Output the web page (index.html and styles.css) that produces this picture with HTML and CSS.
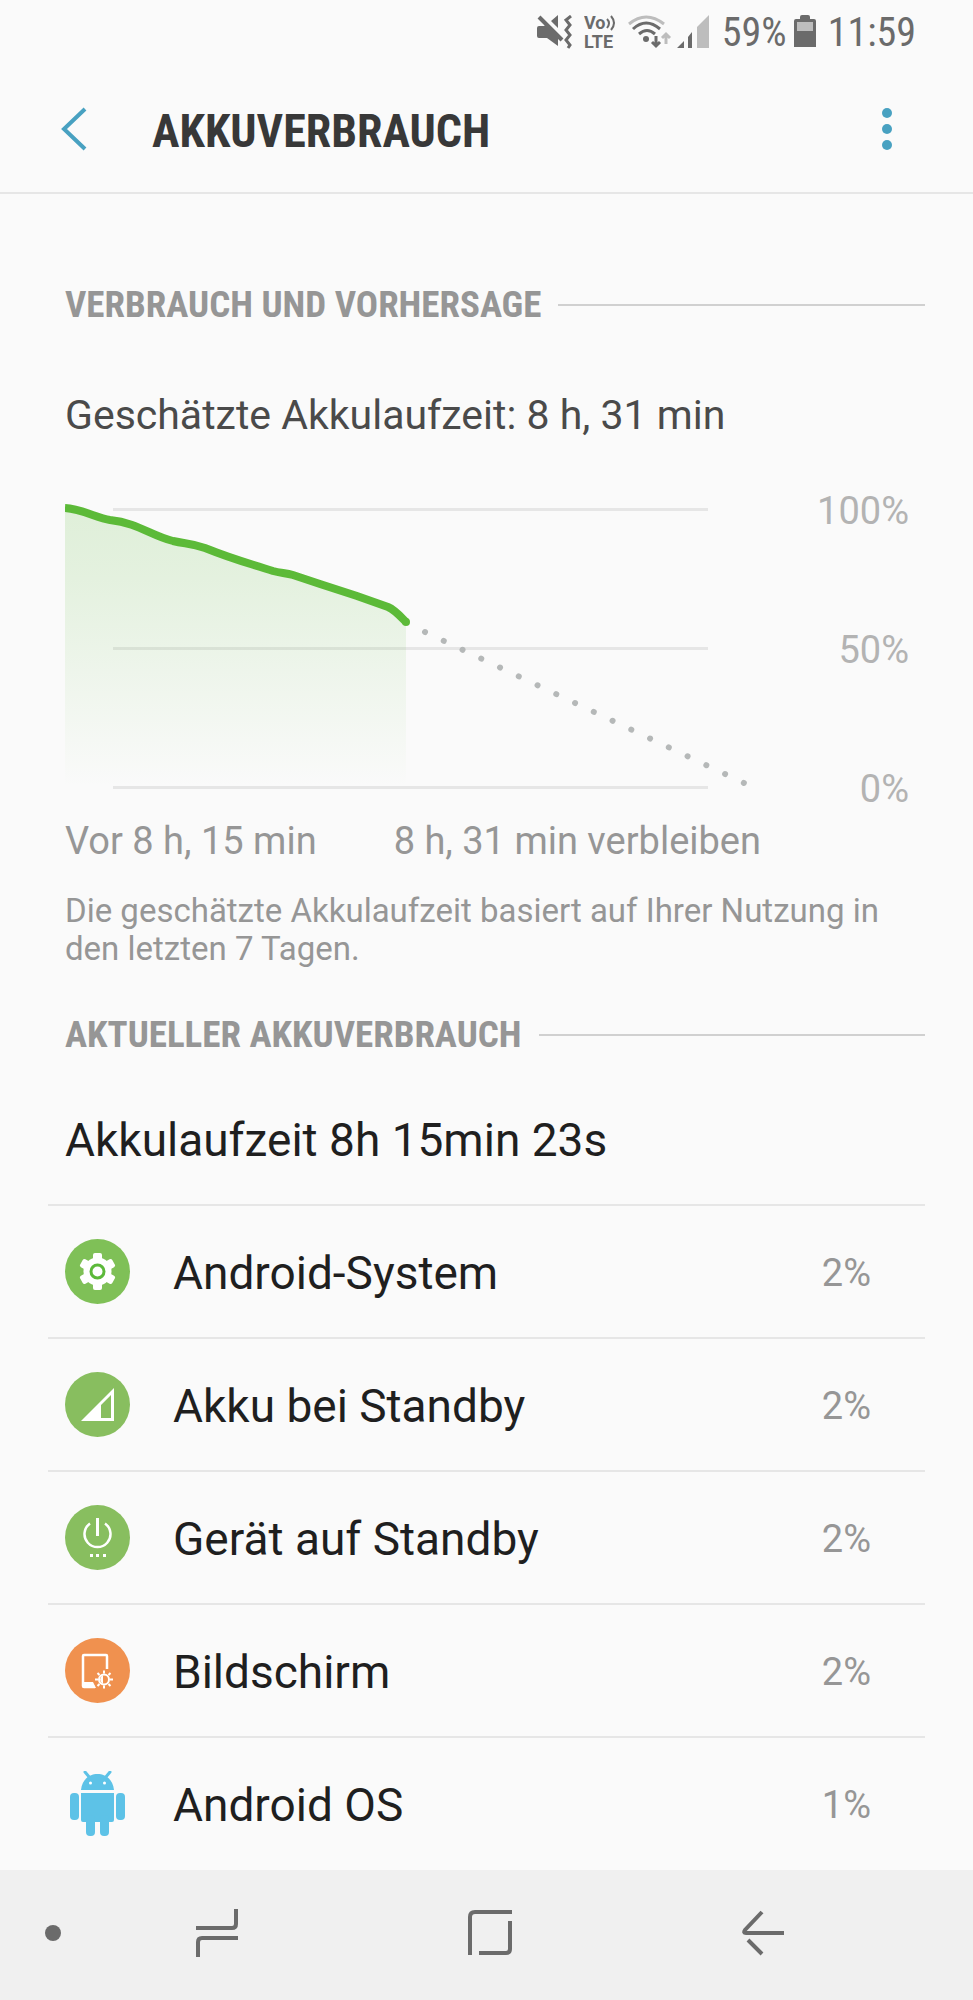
FILE: index.html
```html
<!DOCTYPE html>
<html lang="de">
<head>
    <meta charset="utf-8">
    <meta name="viewport" content="width=device-width, initial-scale=1">
    <title>Akkuverbrauch</title>
    <link rel="stylesheet" href="styles.css">
</head>
<body>
    <div class="status-bar">
        <svg class="mute-icon" width="36" height="34" viewBox="0 0 36 34">
            <path d="M2 11h5l4-3 10 11v12L10 23H2q-2 0-2-2v-8q0-2 2-2zM14 6l7-6v13z" fill="#6b6b6b"/>
            <path d="M4 0l22 23" stroke="#fafafa" stroke-width="3"/>
            <path d="M2 2l23 23" stroke="#6b6b6b" stroke-width="4"/>
            <path d="M34 1l-5 4 4 5-4 5 4 5-4 5 4 5-2 3" fill="none" stroke="#6b6b6b" stroke-width="3"/>
        </svg>
        <svg class="volte-icon" width="34" height="46" viewBox="0 -6 34 46">
            <text x="0" y="14" class="volte-text">Vo</text>
            <text x="0" y="33" class="volte-text">LTE</text>
            <path d="M23 4q4 4 0 9M27 1q6 7 0 14" fill="none" stroke="#6b6b6b" stroke-width="2"/>
        </svg>
        <svg class="wifi-icon" width="45" height="34" viewBox="0 0 45 34">
            <path d="M1 9Q18-5 36 9" fill="none" stroke="#bdbdbd" stroke-width="3"/>
            <path d="M5 14q13-12 27 0M11 19q8-7 16 0" fill="none" stroke="#6b6b6b" stroke-width="3"/>
            <circle cx="18" cy="24" r="3" fill="#6b6b6b"/>
            <path d="M28 21v10M24 27l4 4 4-4" fill="none" stroke="#6b6b6b" stroke-width="3"/>
            <path d="M38 29V19M34 23l4-4 4 4" fill="none" stroke="#bdbdbd" stroke-width="3"/>
        </svg>
        <svg class="signal-icon" width="33" height="34" viewBox="0 0 33 34">
            <path d="M0 33l7-7v7zM11 22l4-5v16h-4z" fill="#6b6b6b"/>
            <path d="M20 12L32 0v33H20z" fill="#bdbdbd"/>
        </svg>
        <span class="status-text">59%</span>
        <svg class="battery-icon" width="22" height="34" viewBox="0 0 22 34">
            <path d="M6 4V2q0-2 2-2h6q2 0 2 2v2h4q2 0 2 2v26H0V6q0-2 2-2z" fill="#6b6b6b"/>
            <path d="M3 7h16v9H3z" fill="#bdbdbd"/>
        </svg>
        <span class="status-text">11:59</span>
    </div>

    <header class="app-bar">
        <button class="icon-button" aria-label="Zurück">
            <svg width="26" height="44" viewBox="0 0 26 44">
                <path d="M24 2L3 22l21 20" fill="none" stroke="#48a1c1" stroke-width="4"/>
            </svg>
        </button>
        <h1>AKKUVERBRAUCH</h1>
        <button class="icon-button" aria-label="Weitere Optionen">
            <svg width="10" height="44" viewBox="0 0 10 44" fill="#48a1c1">
                <circle cx="5" cy="6" r="5"/>
                <circle cx="5" cy="22" r="5"/>
                <circle cx="5" cy="38" r="5"/>
            </svg>
        </button>
    </header>

    <main>
        <section class="forecast">
            <h2>VERBRAUCH UND VORHERSAGE</h2>
            <p class="estimate">Geschätzte Akkulaufzeit: 8 h, 31 min</p>
            <div class="chart">
                <svg class="chart-plot" viewBox="0 0 692 322">
                    <defs>
                        <linearGradient id="fade" x1="0" y1="0" x2="0" y2="1">
                            <stop offset="0" stop-color="#5cba38" stop-opacity="0.17"/>
                            <stop offset="0.25" stop-color="#5cba38" stop-opacity="0.14"/>
                            <stop offset="1" stop-color="#5cba38" stop-opacity="0"/>
                        </linearGradient>
                    </defs>
                    <path d="M48 20.500H643M48 159.500H643M48 298.500H643" stroke="#e6e6e6" stroke-width="3"/>
                    <path d="M0 19C17 20 32 29 45 31C73 34 85 46 108 52C121 55 126 54 140 59C170 71 180 73 208 82C215 84 221 84 228 86L255 95L292 107L323 118C330 121 335 127 341 133V298H0z" fill="url(#fade)"/>
                    <path d="M0 19C17 20 32 29 45 31C73 34 85 46 108 52C121 55 126 54 140 59C170 71 180 73 208 82C215 84 221 84 228 86L255 95L292 107L323 118C330 121 335 127 341 133" fill="none" stroke="#5cba38" stroke-width="8"/>
                    <circle cx="341" cy="133" r="4" fill="#5cba38"/>
                    <path d="M360 143L679 294" stroke="#b5b8b8" stroke-width="6" stroke-linecap="round" stroke-dasharray="0.010 20.740"/>
                </svg>
                <div class="chart-scale">
                    <span>100%</span>
                    <span>50%</span>
                    <span>0%</span>
                </div>
            </div>
            <div class="chart-times">
                <span>Vor 8 h, 15 min</span>
                <span>8 h, 31 min verbleiben</span>
            </div>
            <p class="hint">Die geschätzte Akkulaufzeit basiert auf Ihrer Nutzung in den letzten 7 Tagen.</p>
        </section>

        <section class="usage">
            <h2>AKTUELLER AKKUVERBRAUCH</h2>
            <p class="runtime">Akkulaufzeit 8h 15min 23s</p>
            <ul class="app-list">
                <li>
                    <svg class="app-icon" viewBox="0 0 65 65">
                        <circle cx="32.500" cy="32.500" r="32.500" fill="#7fc057"/>
                        <g fill="#fff">
                            <circle cx="32.500" cy="32.500" r="14"/>
                            <rect id="tooth" x="28" y="14" width="9" height="37" rx="2"/>
                            <use href="#tooth" transform="rotate(60 32.500 32.500)"/>
                            <use href="#tooth" transform="rotate(120 32.500 32.500)"/>
                        </g>
                        <circle cx="32.500" cy="32.500" r="6.500" fill="#fff" stroke="#5cb93a" stroke-width="3"/>
                    </svg>
                    <span class="app-name">Android-System</span>
                    <span class="app-percent">2%</span>
                </li>
                <li>
                    <svg class="app-icon" viewBox="0 0 65 65">
                        <circle cx="32.500" cy="32.500" r="32.500" fill="#88be5f"/>
                        <path d="M16 49L49 16v33zM36 33v13h10V23z" fill="#fff" fill-rule="evenodd"/>
                    </svg>
                    <span class="app-name">Akku bei Standby</span>
                    <span class="app-percent">2%</span>
                </li>
                <li>
                    <svg class="app-icon" viewBox="0 0 65 65">
                        <circle cx="32.500" cy="32.500" r="32.500" fill="#88be5f"/>
                        <path d="M32.500 13v18" stroke="#fff" stroke-width="3"/>
                        <path d="M25 18.500a13 13 0 1 0 15 0" fill="none" stroke="#fff" stroke-width="2.500"/>
                        <path d="M25 49h3v3h-3zM31 49h3v3h-3zM38 49h3v3h-3z" fill="#fff"/>
                    </svg>
                    <span class="app-name">Gerät auf Standby</span>
                    <span class="app-percent">2%</span>
                </li>
                <li>
                    <svg class="app-icon" viewBox="0 0 65 65">
                        <circle cx="32.500" cy="32.500" r="32.500" fill="#f0914f"/>
                        <path d="M42 31V18q0-1-1-1H19q-1 0-1 1v30q0 1 1 1h11" fill="none" stroke="#fff" stroke-width="2.500"/>
                        <path d="M18 44h10l3 6H19z" fill="#fff"/>
                        <circle cx="39" cy="41.500" r="5" fill="none" stroke="#fff" stroke-width="2"/>
                        <path d="M38 37a5 5 0 0 0 0 9z" fill="#fff"/>
                        <path d="M39 32.500v3M39 47.500v3M30 41.500h3M45 41.500h3M32.500 35l2 2M43.500 46l2 2M32.500 48l2-2M43.500 37l2-2" stroke="#fff" stroke-width="2"/>
                    </svg>
                    <span class="app-name">Bildschirm</span>
                    <span class="app-percent">2%</span>
                </li>
                <li>
                    <svg class="app-icon" viewBox="0 0 65 65">
                        <g fill="#5dc2e7">
                            <path d="M16 19C17 8 25 3 32.500 3S48 8 49 19zM16 22h33v27q0 2-2 2H18q-2 0-2-2z"/>
                            <rect x="5" y="22" width="9" height="27" rx="4"/>
                            <rect x="51" y="22" width="9" height="27" rx="4"/>
                            <rect x="21" y="44" width="9" height="21" rx="4"/>
                            <rect x="35" y="44" width="9" height="21" rx="4"/>
                        </g>
                        <path d="M20 1l5 6M45 1l-5 6" stroke="#5dc2e7" stroke-width="3" stroke-linecap="round"/>
                        <circle cx="25.500" cy="12" r="1.500" fill="#fff"/>
                        <circle cx="39.500" cy="12" r="1.500" fill="#fff"/>
                    </svg>
                    <span class="app-name">Android OS</span>
                    <span class="app-percent">1%</span>
                </li>
            </ul>
        </section>
    </main>

    <nav class="nav-bar">
        <button class="icon-button" aria-label="Leiste ausblenden">
            <svg width="16" height="16" viewBox="0 0 16 16">
                <circle cx="8" cy="8" r="8" fill="#6b6b6b"/>
            </svg>
        </button>
        <button class="icon-button" aria-label="Letzte Apps">
            <svg width="42" height="48" viewBox="0 0 42 48" fill="none" stroke="#6b6b6b" stroke-width="4">
                <path d="M40 0v15q0 4-4 4H0M2 48V33q0-4 4-4h36"/>
            </svg>
        </button>
        <button class="icon-button" aria-label="Startbildschirm">
            <svg width="44" height="46" viewBox="0 0 44 46" fill="none" stroke="#6b6b6b" stroke-width="4">
                <path d="M2 45V7q0-5 5-5h37M42 11v28q0 4-4 4H11"/>
            </svg>
        </button>
        <button class="icon-button" aria-label="Zurück">
            <svg width="42" height="46" viewBox="0 0 42 46" fill="none" stroke="#6b6b6b" stroke-width="4">
                <path d="M20 2L3 20q-2 3 1 3h38M6 30l14 14"/>
            </svg>
        </button>
    </nav>
</body>
</html>
```
FILE: styles.css
```css
* {
    box-sizing: border-box;
}

body {
    font-family: Roboto, "Liberation Sans", sans-serif;
    background: #fafafa;
    color: #1f1f1f;
    margin: 0;
    min-height: 100vh;
    display: flex;
    flex-direction: column;
}

h1, h2, p, ul {
    margin: 0;
    padding: 0;
}

svg {
    display: block;
    flex-shrink: 0;
}

.icon-button {
    background: none;
    border: none;
    padding: 0;
    cursor: pointer;
}

/* Status bar */
.status-bar {
    display: flex;
    align-items: center;
    justify-content: flex-end;
    height: 64px;
    padding-right: 57px;
    color: #6b6b6b;
}

.volte-icon {
    margin-left: 11px;
}

.volte-text {
    font-size: 18px;
    font-weight: bold;
    fill: #6b6b6b;
}

.wifi-icon {
    margin-left: 10px;
}

.signal-icon {
    margin: 0 12px 0 4px;
}

.battery-icon {
    margin: 0 12px 0 7px;
}

.status-text {
    font-family: "Roboto Condensed", "Liberation Sans Narrow", Roboto, sans-serif;
    font-size: 40px;
}

/* Title bar */
.app-bar {
    display: flex;
    align-items: center;
    height: 130px;
    padding: 2px 81px 0 61px;
    border-bottom: 2px solid #e6e6e6;
}

h1 {
    flex: 1;
    margin-left: 65px;
    padding-top: 4px;
    font-family: "Roboto Condensed", "Liberation Sans Narrow", Roboto, sans-serif;
    font-size: 46px;
    line-height: 54px;
    color: #383838;
}

/* Content */
main {
    flex: 1;
    padding: 88px 48px 0;
}

.forecast {
    padding-left: 17px;
}

h2 {
    display: flex;
    align-items: center;
    gap: 17px;
    font-family: "Roboto Condensed", "Liberation Sans Narrow", Roboto, sans-serif;
    font-size: 37px;
    line-height: 46px;
    color: #969696;
}

h2::after {
    content: "";
    flex: 1;
    height: 2px;
    background: #d0d0d0;
}

.estimate {
    margin-top: 62px;
    font-size: 41px;
    line-height: 50px;
    color: #4a4a4a;
}

.chart {
    display: flex;
    margin-top: 49px;
    padding-right: 16px;
}

.chart-plot {
    flex: 1;
}

.chart-scale {
    display: flex;
    flex-direction: column;
    justify-content: space-between;
    width: 152px;
    text-align: right;
    font-size: 38px;
    line-height: 44px;
    color: #b3b3b3;
}

.chart-times {
    display: flex;
    gap: 77px;
    margin-top: 8px;
    font-size: 38px;
    line-height: 44px;
    color: #969696;
}

.hint {
    margin-top: 29px;
    font-size: 33px;
    line-height: 38px;
    color: #969696;
}

.usage h2 {
    margin-top: 44px;
    padding-left: 17px;
}

.runtime {
    padding: 55px 17px 37px;
    font-size: 46px;
    line-height: 54px;
}

.app-list {
    list-style: none;
}

.app-list li {
    display: flex;
    align-items: center;
    height: 133px;
    padding: 0 54px 0 17px;
    border-top: 2px solid #e6e6e6;
}

.app-icon {
    width: 65px;
    height: 65px;
}

.app-name,
.app-percent {
    padding-top: 3px;
}

.app-name {
    flex: 1;
    margin-left: 43px;
    font-size: 46px;
}

.app-percent {
    font-size: 38px;
    color: #969696;
}

/* Navigation bar */
.nav-bar {
    display: grid;
    grid-template-columns: 56px 1fr 1fr 1fr;
    height: 130px;
    padding: 0 74px 4px 25px;
    background: #f0f0f0;
}

.nav-bar .icon-button {
    display: flex;
    align-items: center;
    justify-content: center;
}
```
